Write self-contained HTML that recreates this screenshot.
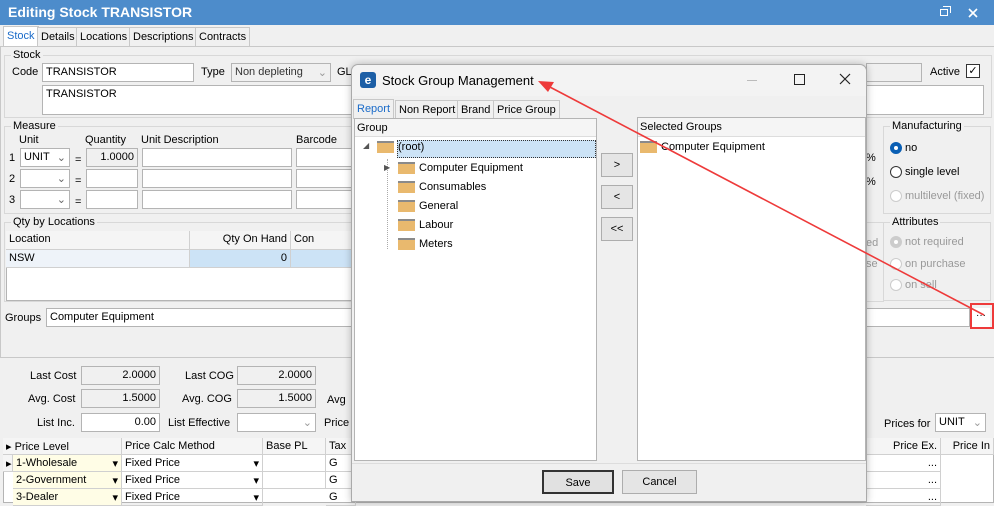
<!DOCTYPE html><html><head><style>
*{box-sizing:border-box;margin:0;padding:0}
body{width:994px;height:503px;overflow:hidden;background:#f0f0f0;font-family:"Liberation Sans",sans-serif;font-size:11px;color:#000;position:relative}
.a{position:absolute}
.in{position:absolute;background:#fff;border:1px solid #b4b4b4;padding:2px 3px;white-space:nowrap;overflow:hidden}
.ro{background:#f0f0f0}
.r{text-align:right}
.lbl{position:absolute;white-space:nowrap}
.grp{position:absolute;border:1px solid #d8d8d8}
.gt{position:absolute;top:-7px;left:6px;background:#f0f0f0;padding:0 2px}
.tab{position:absolute;top:27px;height:19px;border:1px solid #c8c8c8;border-bottom:none;padding:3px 3px;background:#f0f0f0}
.fold{display:inline-block;width:17px;height:12px;background:#e9b96e;border-top:2px solid #8a8a8a;vertical-align:middle;margin-right:4px}
.btn{position:absolute;border:1px solid #adadad;background:#e5e5e5;text-align:center;line-height:22px}
.rad{display:inline-block;width:12px;height:12px;border:1px solid #333;border-radius:50%;vertical-align:middle;margin-right:3px;background:#fff}
.cell{position:absolute;border-right:1px solid #d0d0d0;border-bottom:1px solid #d0d0d0;padding:2px 3px;white-space:nowrap;overflow:hidden;height:17px}
</style></head><body>
<div class="a" style="left:0;top:0;width:994px;height:25px;background:#4d8ccb;color:#fff;font-weight:bold;font-size:14px;padding:4px 8px">Editing Stock TRANSISTOR</div>
<div class="a" style="left:940px;top:9px;width:8px;height:7px;border:1.5px solid #fff"></div>
<div class="a" style="left:943px;top:6px;width:8px;height:7px;border-top:1.5px solid #fff;border-right:1.5px solid #fff"></div>
<svg class="a" style="left:968px;top:8px" width="10" height="10"><path d="M1 1L9 9M9 1L1 9" stroke="#fff" stroke-width="1.6"/></svg>
<div class="tab" style="left:3px;top:26px;height:20px;background:#fff;color:#1a6bc9;border-color:#c8c8c8">Stock</div>
<div class="tab" style="left:37px">Details</div>
<div class="tab" style="left:76px">Locations</div>
<div class="tab" style="left:129px">Descriptions</div>
<div class="tab" style="left:195px">Contracts</div>
<div class="a" style="left:0;top:46px;width:994px;height:1px;background:#c8c8c8"></div>

<div class="grp" style="left:4px;top:55px;width:988px;height:63px"><span class="gt">Stock</span></div>
<div class="lbl" style="left:12px;top:66px">Code</div>
<div class="in" style="left:42px;top:63px;width:152px;height:19px">TRANSISTOR</div>
<div class="lbl" style="left:201px;top:66px">Type</div>
<div class="in ro" style="left:231px;top:63px;width:100px;height:19px;color:#333">Non depleting <span style="float:right;color:#999">⌄</span></div>
<div class="lbl" style="left:337px;top:66px">GL</div>
<div class="in ro" style="left:866px;top:63px;width:56px;height:19px"></div>
<div class="lbl" style="left:930px;top:66px">Active</div>
<div class="a" style="left:966px;top:64px;width:14px;height:14px;border:1px solid #333;background:#fff;font-size:11px;line-height:12px;text-align:center">✓</div>
<div class="in" style="left:42px;top:85px;width:942px;height:30px">TRANSISTOR</div>

<div class="grp" style="left:4px;top:126px;width:350px;height:88px"><span class="gt">Measure</span></div>
<div class="lbl" style="left:19px;top:134px">Unit</div>
<div class="lbl" style="left:85px;top:134px">Quantity</div>
<div class="lbl" style="left:141px;top:134px">Unit Description</div>
<div class="lbl" style="left:296px;top:134px">Barcode</div>
<div class="lbl" style="left:9px;top:152px">1</div><div class="lbl" style="left:9px;top:173px">2</div><div class="lbl" style="left:9px;top:194px">3</div>
<div class="in" style="left:20px;top:148px;width:50px;height:19px">UNIT<span style="float:right;color:#666">⌄</span></div>
<div class="in" style="left:20px;top:169px;width:50px;height:19px"><span style="float:right;color:#666">⌄</span></div>
<div class="in" style="left:20px;top:190px;width:50px;height:19px"><span style="float:right;color:#666">⌄</span></div>
<div class="lbl" style="left:75px;top:154px">=</div><div class="lbl" style="left:75px;top:175px">=</div><div class="lbl" style="left:75px;top:196px">=</div>
<div class="in ro r" style="left:86px;top:148px;width:52px;height:19px">1.0000</div>
<div class="in" style="left:86px;top:169px;width:52px;height:19px"></div>
<div class="in" style="left:86px;top:190px;width:52px;height:19px"></div>
<div class="in" style="left:142px;top:148px;width:150px;height:19px"></div>
<div class="in" style="left:142px;top:169px;width:150px;height:19px"></div>
<div class="in" style="left:142px;top:190px;width:150px;height:19px"></div>
<div class="in" style="left:296px;top:148px;width:60px;height:19px"></div>
<div class="in" style="left:296px;top:169px;width:60px;height:19px"></div>
<div class="in" style="left:296px;top:190px;width:60px;height:19px"></div>

<div class="lbl" style="left:866px;top:152px">%</div><div class="lbl" style="left:866px;top:176px">%</div>
<div class="grp" style="left:883px;top:126px;width:108px;height:88px"><span class="gt">Manufacturing</span></div>
<div class="lbl" style="left:890px;top:142px"><span class="rad" style="border:4px solid #0a5fb4"></span>no</div>
<div class="lbl" style="left:890px;top:166px"><span class="rad"></span>single level</div>
<div class="lbl" style="left:890px;top:190px;color:#999"><span class="rad" style="border-color:#ccc"></span>multilevel (fixed)</div>
<div class="grp" style="left:883px;top:222px;width:108px;height:79px"><span class="gt">Attributes</span></div>
<div class="lbl" style="left:890px;top:236px;color:#999"><span class="rad" style="border:4px solid #ccc"></span>not required</div>
<div class="lbl" style="left:890px;top:258px;color:#999"><span class="rad" style="border-color:#ccc"></span>on purchase</div>
<div class="lbl" style="left:890px;top:279px;color:#999"><span class="rad" style="border-color:#ccc"></span>on sell</div>
<div class="lbl" style="left:866px;top:237px;color:#999">ed</div><div class="lbl" style="left:866px;top:258px;color:#999">se</div>

<div class="grp" style="left:4px;top:222px;width:880px;height:80px"><span class="gt">Qty by Locations</span></div>
<div class="a" style="left:6px;top:231px;width:350px;height:70px;background:#fff;border:1px solid #b4b4b4"></div>
<div class="cell" style="left:6px;top:231px;width:184px;height:19px;background:#f5f5f5">Location</div>
<div class="cell r" style="left:190px;top:231px;width:101px;height:19px;background:#f5f5f5">Qty On Hand</div>
<div class="cell" style="left:291px;top:231px;width:65px;height:19px;background:#f5f5f5">Con</div>
<div class="cell" style="left:6px;top:250px;width:184px;height:18px;background:#eef3f9">NSW</div>
<div class="cell r" style="left:190px;top:250px;width:101px;height:18px;background:#cce3f6">0</div>
<div class="cell" style="left:291px;top:250px;width:65px;height:18px;background:#cce3f6"></div>

<div class="lbl" style="left:5px;top:312px">Groups</div>
<div class="in" style="left:46px;top:308px;width:924px;height:19px">Computer Equipment</div>
<div class="a" style="left:972px;top:308px;width:18px;height:19px;text-align:center;font-size:10px;line-height:16px;background:#fff">···</div>
<div class="a" style="left:0;top:357px;width:994px;height:1px;background:#c8c8c8"></div>
<div class="a" style="left:0;top:47px;width:1px;height:311px;background:#c8c8c8"></div>

<div class="lbl" style="left:30px;top:370px">Last Cost</div>
<div class="in ro r" style="left:81px;top:366px;width:79px;height:19px">2.0000</div>
<div class="lbl" style="left:185px;top:370px">Last COG</div>
<div class="in ro r" style="left:237px;top:366px;width:79px;height:19px">2.0000</div>
<div class="lbl" style="left:28px;top:393px">Avg. Cost</div>
<div class="in ro r" style="left:81px;top:389px;width:79px;height:19px">1.5000</div>
<div class="lbl" style="left:182px;top:393px">Avg. COG</div>
<div class="in ro r" style="left:237px;top:389px;width:79px;height:19px">1.5000</div>
<div class="lbl" style="left:327px;top:394px">Avg</div>
<div class="lbl" style="left:37px;top:417px">List Inc.</div>
<div class="in r" style="left:81px;top:413px;width:79px;height:19px">0.00</div>
<div class="lbl" style="left:168px;top:417px">List Effective</div>
<div class="in" style="left:237px;top:413px;width:79px;height:19px"><span style="float:right;color:#999">⌄</span></div>
<div class="lbl" style="left:324px;top:417px">Price</div>
<div class="lbl" style="left:884px;top:418px">Prices for</div>
<div class="in" style="left:935px;top:413px;width:51px;height:19px">UNIT<span style="float:right;color:#999">⌄</span></div>

<div class="a" style="left:3px;top:438px;width:991px;height:65px;background:#fff;border:1px solid #b4b4b4"></div>
<div class="cell" style="left:3px;top:438px;width:119px;background:#f5f5f5">▸ Price Level</div>
<div class="cell" style="left:122px;top:438px;width:141px;background:#f5f5f5">Price Calc Method</div>
<div class="cell" style="left:263px;top:438px;width:63px;background:#f5f5f5">Base PL</div>
<div class="cell" style="left:326px;top:438px;width:30px;background:#f5f5f5">Tax</div>
<div class="cell r" style="left:866px;top:438px;width:75px;background:#f5f5f5">Price Ex.</div>
<div class="cell r" style="left:941px;top:438px;width:53px;background:#f5f5f5">Price In</div>
<div class="cell" style="left:3px;top:455px;width:10px;background:#f5f5f5">▸</div>
<div class="cell" style="left:13px;top:455px;width:109px;background:#fffde6">1-Wholesale<span style="float:right">▾</span></div>
<div class="cell" style="left:13px;top:472px;width:109px;background:#fffde6">2-Government<span style="float:right">▾</span></div>
<div class="cell" style="left:13px;top:489px;width:109px;background:#fffde6">3-Dealer<span style="float:right">▾</span></div>
<div class="cell" style="left:122px;top:455px;width:141px">Fixed Price<span style="float:right">▾</span></div>
<div class="cell" style="left:122px;top:472px;width:141px">Fixed Price<span style="float:right">▾</span></div>
<div class="cell" style="left:122px;top:489px;width:141px">Fixed Price<span style="float:right">▾</span></div>
<div class="cell" style="left:263px;top:455px;width:63px"></div><div class="cell" style="left:263px;top:472px;width:63px"></div>
<div class="cell" style="left:326px;top:455px;width:30px">G</div><div class="cell" style="left:326px;top:472px;width:30px">G</div><div class="cell" style="left:326px;top:489px;width:30px">G</div>
<div class="cell r" style="left:866px;top:455px;width:75px">...</div><div class="cell r" style="left:866px;top:472px;width:75px">...</div><div class="cell r" style="left:866px;top:489px;width:75px">...</div>

<!-- dialog -->
<div class="a" style="left:351px;top:64px;width:516px;height:438px;background:#f0f0f0;border:1px solid #aaa;border-radius:7px 7px 0 0;box-shadow:0 0 8px rgba(0,0,0,.25)">
<div class="a" style="left:0;top:0;width:514px;height:31px;background:#f3f3f3;border-radius:7px 7px 0 0"></div>
<div class="a" style="left:8px;top:7px;width:16px;height:16px;background:#1d5fa6;border-radius:3px;color:#fff;font-size:12px;font-weight:bold;text-align:center;line-height:16px">e</div>
<div class="lbl" style="left:30px;top:8px;font-size:13px">Stock Group Management</div>
<div class="a" style="left:395px;top:15px;width:10px;height:1px;background:#bbb"></div>
<div class="a" style="left:442px;top:9px;width:11px;height:11px;border:1.5px solid #222"></div>
<svg class="a" style="left:487px;top:8px" width="12" height="12"><path d="M1 1L11 11M11 1L1 11" stroke="#222" stroke-width="1.2"/></svg>
<div class="tab" style="left:1px;top:34px;height:20px;color:#1a6bc9;background:#f0f0f0">Report</div>
<div class="tab" style="left:43px;top:35px">Non Report</div>
<div class="tab" style="left:105px;top:35px">Brand</div>
<div class="tab" style="left:141px;top:35px">Price Group</div>
<div class="a" style="left:2px;top:53px;width:243px;height:343px;background:#fff;border:1px solid #b4b4b4">
<div style="height:18px;background:#f5f5f5;border-bottom:1px solid #ddd;padding:3px 2px">Group</div>
<div class="a" style="left:42px;top:21px;width:199px;height:18px;background:#cce3f6;border:1px dotted #333"></div>
<div class="lbl" style="left:8px;top:22px;font-size:8px;color:#555">◢</div>
<div class="lbl" style="left:22px;top:22px"><span class="fold"></span>(root)</div>
<div class="a" style="left:32px;top:40px;width:1px;height:90px;border-left:1px dotted #aaa"></div>
<div class="lbl" style="left:29px;top:44px;font-size:8px;color:#555">▶</div>
<div class="lbl" style="left:43px;top:43px"><span class="fold"></span>Computer Equipment</div>
<div class="lbl" style="left:43px;top:62px"><span class="fold"></span>Consumables</div>
<div class="lbl" style="left:43px;top:81px"><span class="fold"></span>General</div>
<div class="lbl" style="left:43px;top:100px"><span class="fold"></span>Labour</div>
<div class="lbl" style="left:43px;top:119px"><span class="fold"></span>Meters</div>
</div>
<div class="btn" style="left:249px;top:88px;width:32px;height:24px">&gt;</div>
<div class="btn" style="left:249px;top:120px;width:32px;height:24px">&lt;</div>
<div class="btn" style="left:249px;top:152px;width:32px;height:24px">&lt;&lt;</div>
<div class="a" style="left:285px;top:52px;width:229px;height:344px;background:#fff;border:1px solid #b4b4b4">
<div style="height:19px;background:#f5f5f5;border-bottom:1px solid #ddd;padding:3px 2px">Selected Groups</div>
<div class="lbl" style="left:2px;top:23px"><span class="fold"></span>Computer Equipment</div>
</div>
<div class="a" style="left:0;top:398px;width:514px;height:1px;background:#ddd"></div>
<div class="btn" style="left:190px;top:405px;width:72px;height:24px;border:2px solid #333;background:#e1e1e1">Save</div>
<div class="btn" style="left:270px;top:405px;width:75px;height:24px">Cancel</div>
</div>

<svg class="a" style="left:0;top:0" width="994" height="503">
<line x1="984" y1="315" x2="548" y2="86" stroke="#ee3a3a" stroke-width="1.6"/>
<polygon points="538,81 554,82 548,92" fill="#ee3a3a"/>
<rect x="971" y="304" width="22" height="24" fill="none" stroke="#ee3a3a" stroke-width="2"/>
</svg>
</body></html>
